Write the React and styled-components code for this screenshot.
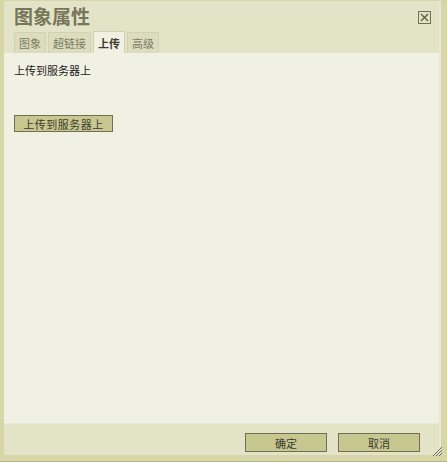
import React from 'react';
import styled, { createGlobalStyle } from 'styled-components';

const Global = createGlobalStyle`
  html, body {
    margin: 0;
    padding: 0;
    background: #ffffff;
  }
  body {
    font-family: "Liberation Sans", "Noto Sans CJK SC", sans-serif;
  }
`;

const tabs = ['图象', '超链接', '上传', '高级'];

export default function App() {
  const active = 2;

  return (
    <>
      <Global />
      <Dialog>
        <Frame>
          <TitleBar>
            <Title>图象属性</Title>
            <Close aria-label="close">
              <svg width="9" height="9" viewBox="0 0 9 9">
                <path d="M1 1L8 8M8 1L1 8" stroke="#5f5f48" strokeWidth="1.4" />
              </svg>
            </Close>
          </TitleBar>
          <TabRow>
            {tabs.map((t, i) => (
              <Tab key={t} $active={i === active}>
                {t}
              </Tab>
            ))}
          </TabRow>
          <Body>
            <Label>上传到服务器上</Label>
            <UploadButton>上传到服务器上</UploadButton>
          </Body>
          <Footer>
            <FooterButton>确定</FooterButton>
            <FooterButton>取消</FooterButton>
          </Footer>
        </Frame>
        <Grip width="11" height="11" viewBox="0 0 11 11">
          <path d="M10 1L1 10M10 4L4 10M10 7L7 10" stroke="#6d6d55" strokeWidth="1" />
        </Grip>
      </Dialog>
    </>
  );
}

const Dialog = styled.div`
  position: relative;
  box-sizing: border-box;
  width: 447px;
  height: 462px;
  padding: 1px 6px 6px 4px;
  background: #d6d6a9;
  border-bottom: 1px solid #b4b48c;
  display: flex;
`;

const Frame = styled.div`
  flex: 1;
  display: flex;
  flex-direction: column;
  background: #e3e3c7;
  border-right: 2px solid #e9e9d2;
`;

const TitleBar = styled.div`
  height: 30px;
  display: flex;
  align-items: center;
  justify-content: space-between;
  padding: 0 8px 0 10px;
`;

const Title = styled.div`
  font-size: 19px;
  font-weight: bold;
  color: #76765a;
  margin-top: -1px;
`;

const Close = styled.div`
  box-sizing: border-box;
  width: 13px;
  height: 13px;
  border: 1px solid #6f6f55;
  display: flex;
  align-items: center;
  justify-content: center;
  margin-top: 3px;
`;

const TabRow = styled.div`
  display: flex;
  gap: 2px;
  padding: 0 10px;
  height: 22px;
  align-items: flex-end;
`;

const Tab = styled.div`
  box-sizing: border-box;
  height: ${(p) => (p.$active ? '22px' : '21px')};
  padding: 0 4px;
  display: flex;
  align-items: center;
  font-size: 11px;
  font-weight: ${(p) => (p.$active ? 'bold' : 'normal')};
  color: ${(p) => (p.$active ? '#3c3c30' : '#7b7b62')};
  background: ${(p) => (p.$active ? '#f1f1e3' : '#dcdcbf')};
  border: 1px solid #d2d2b0;
  border-bottom: none;
`;

const Body = styled.div`
  flex: 1;
  background: #f1f1e3;
  padding: 12px 10px 0;
  display: flex;
  flex-direction: column;
  align-items: flex-start;
`;

const Label = styled.div`
  font-size: 11px;
  color: #222;
  line-height: 13px;
`;

const UploadButton = styled.button`
  box-sizing: border-box;
  margin-top: 37px;
  width: 99px;
  height: 17px;
  padding: 0;
  font-family: inherit;
  font-size: 11px;
  letter-spacing: 0.5px;
  color: #3c3c30;
  background: #c7c78f;
  border: 1px solid #6f6f55;
`;

const Footer = styled.div`
  height: 32px;
  display: flex;
  justify-content: flex-end;
  align-items: flex-start;
  gap: 11px;
  padding: 9px 19px 0 0;
  box-sizing: border-box;
  border-top: 1px solid #e9e9d8;
`;

const FooterButton = styled.button`
  box-sizing: border-box;
  width: 82px;
  height: 19px;
  padding: 0;
  font-family: inherit;
  font-size: 11px;
  color: #3c3c30;
  background: #c7c78f;
  border: 1px solid #6f6f55;
`;

const Grip = styled.svg`
  position: absolute;
  right: 4px;
  bottom: 4px;
`;
